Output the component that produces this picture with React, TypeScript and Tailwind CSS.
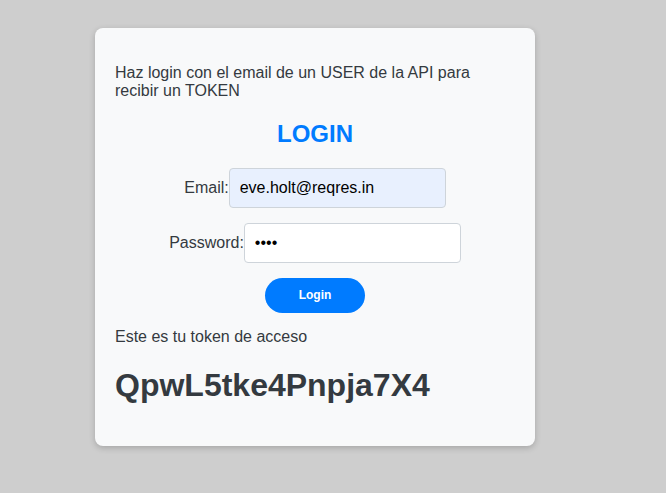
import React, { useState } from "react";

export default function App() {
  const [email, setEmail] = useState("eve.holt@reqres.in");
  const [password, setPassword] = useState("city");

  return (
    <div className="min-h-screen bg-[#cecece] pt-[28px] pl-[95px] font-['Liberation_Sans',Arial,sans-serif]">
      <div className="w-[440px] h-[418px] bg-[#f8f9fa] rounded-lg shadow-[0_2px_6px_rgba(0,0,0,0.2)] px-5 text-[#343a40]">
        <p className="pt-[36px] text-[16px] leading-[18.4px]">
          Haz login con el email de un USER de la API para recibir un TOKEN
        </p>
        <h2 className="mt-[19px] text-[24px] leading-[28px] font-bold text-[#007bff] text-center">LOGIN</h2>

        <form className="mt-[20px] flex flex-col items-center" onSubmit={(e) => e.preventDefault()}>
          <div className="flex items-center justify-center">
            <label className="text-[16px]">Email:</label>
            <input
              type="email"
              value={email}
              onChange={(e) => setEmail(e.target.value)}
              className="w-[217px] h-[40px] px-[10px] bg-[#e8f0fe] border border-[#ced4da] rounded text-[16px] text-black outline-none"
            />
          </div>
          <div className="mt-[15px] flex items-center justify-center">
            <label className="text-[16px]">Password:</label>
            <input
              type="password"
              value={password}
              onChange={(e) => setPassword(e.target.value)}
              className="w-[217px] h-[40px] px-[10px] bg-white border border-[#ced4da] rounded text-[16px] text-black outline-none"
            />
          </div>
          <button
            type="submit"
            className="mt-[15px] w-[100px] h-[35px] rounded-full bg-[#007bff] text-white text-[12px] font-bold"
          >
            Login
          </button>
        </form>

        <p className="mt-[15px] text-[16px] leading-[18.4px]">Este es tu token de acceso</p>
        <h1 className="mt-[21px] text-[32px] leading-[37px] font-bold">QpwL5tke4Pnpja7X4</h1>
      </div>
    </div>
  );
}
